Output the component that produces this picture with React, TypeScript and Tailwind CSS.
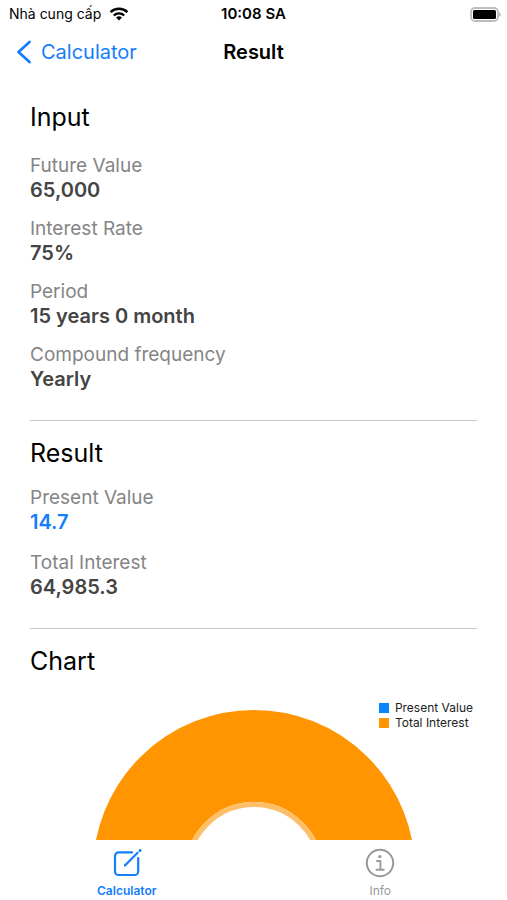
import type { ReactNode } from "react";

type Entry = {
  label: string;
  value: string;
  highlight?: boolean;
};

const inputs: Entry[] = [
  { label: "Future Value", value: "65,000" },
  { label: "Interest Rate", value: "75%" },
  { label: "Period", value: "15 years 0 month" },
  { label: "Compound frequency", value: "Yearly" },
];

const results: Entry[] = [
  { label: "Present Value", value: "14.7", highlight: true },
  { label: "Total Interest", value: "64,985.3" },
];

const WifiIcon = () => (
  <svg width="20" height="14" viewBox="0 0 20 14" aria-hidden="true">
    <g fill="none" stroke="#000" strokeWidth="2.4">
      <path d="M1.6 5.2a12 12 0 0 1 16.8 0" />
      <path d="M4.8 8.5a7.4 7.4 0 0 1 10.4 0" />
    </g>
    <path d="M10 13.6 7 10.6a4.3 4.3 0 0 1 6 0Z" />
  </svg>
);

const BatteryIcon = () => (
  <svg width="32" height="15" viewBox="0 0 32 15" aria-label="Battery" role="img">
    <rect x="1" y="1" width="27" height="13" rx="4" fill="#fff" stroke="#bdbdbd" strokeWidth="1.8" />
    <rect x="3" y="3" width="23" height="9" rx="1.5" />
    <path d="M29.3 5.2c1.8.6 1.8 4 0 4.6Z" fill="#a8a8a8" />
  </svg>
);

const StatusBar = () => (
  <div className="grid grid-cols-3 items-center h-7 px-[9px] text-[14px] leading-5 text-black">
    <div className="flex items-center gap-2 whitespace-nowrap">
      <span>Nhà cung cấp</span>
      <WifiIcon />
    </div>
    <span className="text-center text-[15px] font-semibold">10:08 SA</span>
    <div className="flex justify-end -mr-1">
      <BatteryIcon />
    </div>
  </div>
);

const Header = () => (
  <header className="grid grid-cols-3 items-center h-12 px-4">
    <button type="button" className="flex items-center gap-[9px] text-[#147efb] text-[20px] leading-6">
      <svg width="16" height="24" viewBox="0 0 16 24" aria-hidden="true">
        <path
          d="M13.5 2 2.5 12l11 10"
          fill="none"
          stroke="currentColor"
          strokeWidth="2.8"
          strokeLinecap="round"
          strokeLinejoin="round"
        />
      </svg>
      Calculator
    </button>
    <h1 className="text-center text-[20px] leading-6 font-semibold text-black">Result</h1>
  </header>
);

const Heading = ({ children }: { children: ReactNode }) => (
  <h2 className="text-[25px] leading-8 text-black">{children}</h2>
);

const Item = ({ label, value, highlight }: Entry) => (
  <div>
    <dt className="text-[19px] leading-6 text-[#858585]">{label}</dt>
    <dd
      className={
        highlight
          ? "text-[20px] leading-[25px] font-semibold text-[#147efb]"
          : "text-[20px] leading-[25px] font-semibold text-[#444444]"
      }
    >
      {value}
    </dd>
  </div>
);

const Chart = () => (
  <div className="relative mt-[33px] flex justify-center">
    <svg width="322" height="322" viewBox="0 0 322 322" role="img" aria-label="Chart">
      <circle cx="161" cy="161" r="115" fill="none" stroke="#ff9500" strokeWidth="92" />
      <circle cx="161" cy="161" r="66.5" fill="none" stroke="#ffbf69" strokeWidth="5" />
    </svg>
    <ul className="absolute right-1 -top-[10px] text-[12px] leading-[15px] text-[#222222]">
      <li className="flex items-center gap-[6px]">
        <span className="size-[10px] bg-[#0a84ff]" />
        Present Value
      </li>
      <li className="flex items-center gap-[6px]">
        <span className="size-[10px] bg-[#ff9500]" />
        Total Interest
      </li>
    </ul>
  </div>
);

const TabBar = () => (
  <nav className="grid grid-cols-2 h-[60px] bg-white text-[12px] leading-4">
    <button type="button" className="flex flex-col items-center pt-2 gap-[5px] font-semibold text-[#147efb]">
      <svg width="30" height="30" viewBox="0 0 30 30" aria-hidden="true">
        <g fill="none" stroke="currentColor" strokeWidth="2.2" strokeLinecap="round">
          <path d="M20 4.4H6.6a3.6 3.6 0 0 0-3.6 3.6v15.4a3.6 3.6 0 0 0 3.6 3.6h16a3.6 3.6 0 0 0 3.6-3.6V10" />
          <path d="M13.2 17.2 25.6 4.8" />
        </g>
        <path d="M11.8 18.8l.9-3 2 2Z" fill="currentColor" />
        <circle cx="28" cy="2.4" r="1.5" fill="currentColor" />
      </svg>
      Calculator
    </button>
    <button type="button" className="flex flex-col items-center pt-2 gap-[5px] text-[#999999]">
      <svg width="30" height="30" viewBox="0 0 30 30" aria-hidden="true">
        <circle cx="15" cy="15" r="13.2" fill="none" stroke="currentColor" strokeWidth="2" />
        <circle cx="14.8" cy="8.6" r="1.7" fill="currentColor" />
        <path
          d="M12 13h3.4v8.6M11.6 21.8h7.2"
          fill="none"
          stroke="currentColor"
          strokeWidth="1.9"
          strokeLinecap="round"
          strokeLinejoin="round"
        />
      </svg>
      Info
    </button>
  </nav>
);

export default function App() {
  return (
    <div className="flex h-screen flex-col bg-white font-['Inter',sans-serif]">
      <StatusBar />
      <Header />
      <main className="min-h-0 flex-1 overflow-y-auto [scrollbar-width:none] px-[30px] pt-[25px]">
        <section className="border-b border-[#c8c8c8] pb-[28px]">
          <Heading>Input</Heading>
          <dl className="mt-[21px] flex flex-col gap-[14px]">
            {inputs.map((entry) => (
              <Item key={entry.label} {...entry} />
            ))}
          </dl>
        </section>
        <section className="border-b border-[#c8c8c8] pt-4 pb-[28px]">
          <Heading>Result</Heading>
          <dl className="mt-[17px] flex flex-col gap-4">
            {results.map((entry) => (
              <Item key={entry.label} {...entry} />
            ))}
          </dl>
        </section>
        <section className="pt-4">
          <Heading>Chart</Heading>
          <Chart />
        </section>
      </main>
      <TabBar />
    </div>
  );
}
